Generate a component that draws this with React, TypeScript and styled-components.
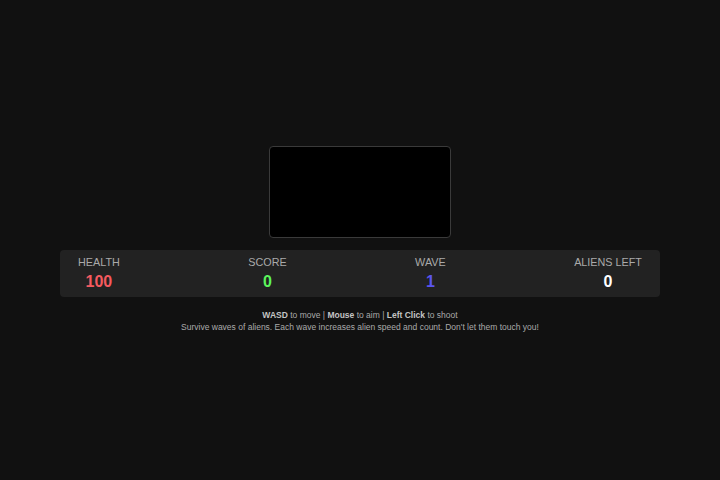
import styled, { createGlobalStyle } from "styled-components";

const GlobalStyle = createGlobalStyle`
  html, body {
    margin: 0;
    padding: 0;
    background: #111;
    color: #ddd;
    font-family: "Liberation Sans", Arial, sans-serif;
  }
`;

const Page = styled.div`
  min-height: 100vh;
  display: flex;
  flex-direction: column;
  align-items: center;
  justify-content: center;
  padding-bottom: 2px;
  box-sizing: border-box;
`;

const GameCanvas = styled.div`
  width: 180px;
  height: 90px;
  background: #000;
  border: 1px solid #3a3a3a;
  border-radius: 4px;
`;

const StatsBar = styled.div`
  width: 600px;
  box-sizing: border-box;
  margin-top: 12px;
  padding: 5px 18px 4px;
  background: #222;
  border-radius: 4px;
  display: flex;
  justify-content: space-between;
`;

const Stat = styled.div`
  display: flex;
  flex-direction: column;
  align-items: center;
`;

const Label = styled.div`
  font-size: 10.8px;
  line-height: 14px;
  color: #aaa;
`;

const Value = styled.div<{ $color: string }>`
  padding-top: 2px;
  font-size: 16px;
  line-height: 22px;
  font-weight: bold;
  color: ${(p) => p.$color};
`;

const Help = styled.div`
  margin-top: 12px;
  font-size: 8.5px;
  line-height: 12px;
  color: #aaa;
  text-align: center;

  b {
    color: #c4c4c4;
  }
`;

const stats = [
  { label: "HEALTH", value: "100", color: "#f55a5f" },
  { label: "SCORE", value: "0", color: "#5cf55c" },
  { label: "WAVE", value: "1", color: "#5a55f0" },
  { label: "ALIENS LEFT", value: "0", color: "#ffffff" },
];

export default function App() {
  return (
    <>
      <GlobalStyle />
      <Page>
        <GameCanvas />
        <StatsBar>
          {stats.map((s) => (
            <Stat key={s.label}>
              <Label>{s.label}</Label>
              <Value $color={s.color}>{s.value}</Value>
            </Stat>
          ))}
        </StatsBar>
        <Help>
          <div>
            <b>WASD</b> to move | <b>Mouse</b> to aim | <b>Left Click</b> to shoot
          </div>
          <div>Survive waves of aliens. Each wave increases alien speed and count. Don't let them touch you!</div>
        </Help>
      </Page>
    </>
  );
}
